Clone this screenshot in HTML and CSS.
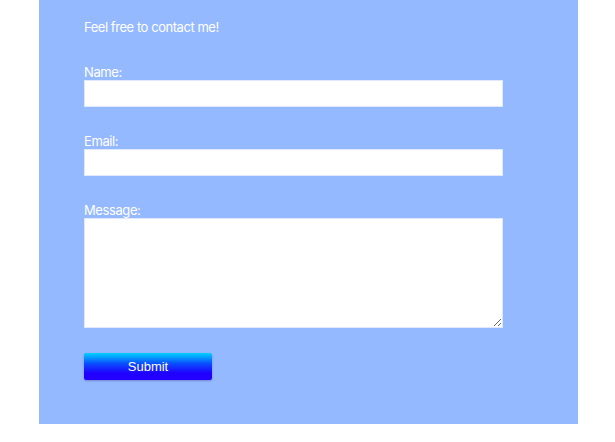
FILE: index.html
```html
<!DOCTYPE html>
<html lang="en">
<head>
<meta charset="utf-8">
<title>Contact</title>
<link rel="stylesheet" href="styles.css">
</head>
<body>
<main class="panel">
  <p class="intro">Feel free to contact me!</p>
  <form class="contact-form">
    <div class="field">
      <label class="field-label" for="name">Name:</label>
      <input class="field-input" id="name" type="text">
    </div>
    <div class="field">
      <label class="field-label" for="email">Email:</label>
      <input class="field-input" id="email" type="email">
    </div>
    <div class="field">
      <label class="field-label" for="message">Message:</label>
      <textarea class="field-input field-textarea" id="message"></textarea>
    </div>
    <button class="submit" type="button">Submit</button>
  </form>
</main>
</body>
</html>
```
FILE: styles.css
```css
html, body {
  margin: 0;
  padding: 0;
  background: #ffffff;
}

body {
  font-family: Inter, "Noto Sans", sans-serif;
}

.panel {
  box-sizing: border-box;
  width: 539px;
  height: 424px;
  margin: 0 37px 0 39px;
  padding: 19px 45px 0 45px;
  background: #95b9ff;
  color: #ffffff;
}

.intro {
  margin: 0 0 30px 0;
  font-size: 13px;
  letter-spacing: -0.45px;
  line-height: 16px;
}

.contact-form {
  display: flex;
  flex-direction: column;
}

.field {
  display: flex;
  flex-direction: column;
  margin-bottom: 27px;
}

.field-label {
  font-size: 13px;
  letter-spacing: -0.4px;
  line-height: 15px;
  height: 15px;
}

.field-input {
  box-sizing: border-box;
  width: 419px;
  height: 27px;
  margin: 0;
  padding: 2px 4px;
  border: 1px solid #dfe8ff;
  background: #ffffff;
  font-family: "Liberation Sans", Arial, sans-serif;
  font-size: 13px;
  outline: none;
}

.field-textarea {
  height: 110px;
  resize: both;
}

.field:last-of-type {
  margin-bottom: 25px;
}

.submit {
  box-sizing: border-box;
  width: 128px;
  height: 27px;
  padding: 0;
  border: none;
  border-radius: 2px;
  background: linear-gradient(to bottom, #00d2ff 0%, #0a4cff 40%, #2000ff 75%, #2400ff 100%);
  box-shadow: 0 1px 2px rgba(40, 40, 120, 0.35);
  color: #ffffff;
  font-family: "Liberation Sans", Arial, sans-serif;
  font-size: 13px;
  cursor: pointer;
}
```
